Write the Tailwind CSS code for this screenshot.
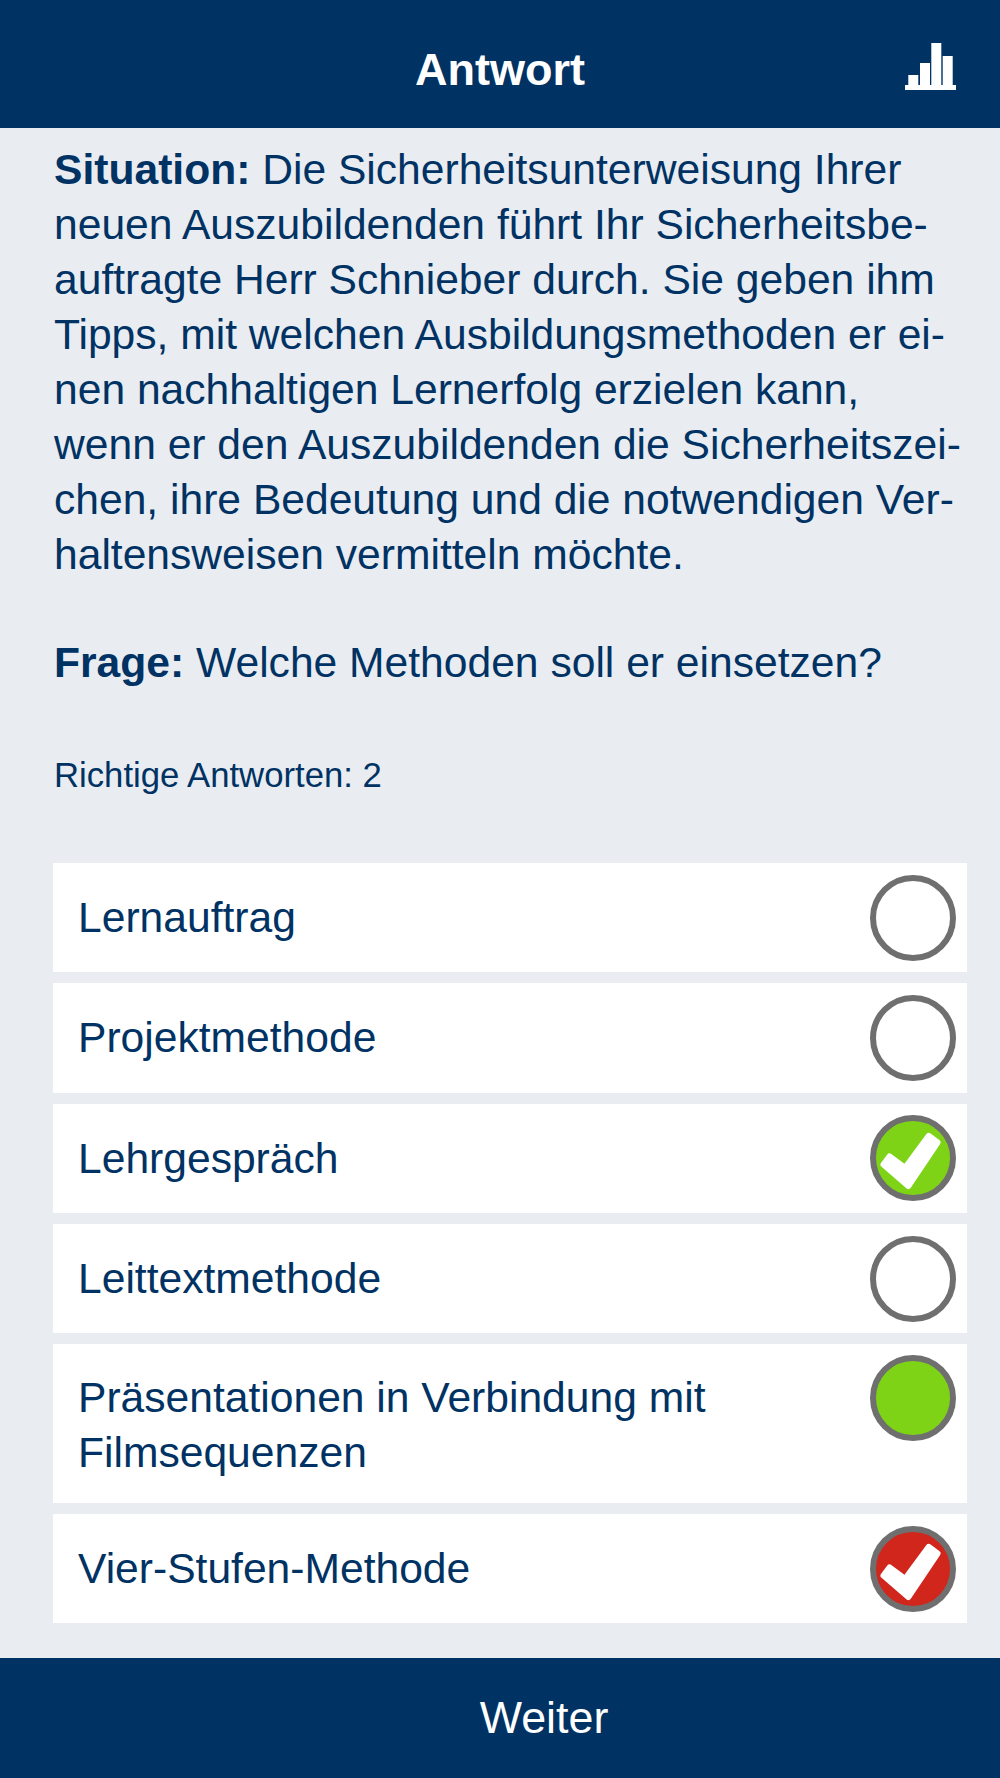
<!DOCTYPE html>
<html lang="de">
<head>
    <meta charset="UTF-8">
    <title>Antwort</title>
    <script src="https://cdn.jsdelivr.net/npm/@tailwindcss/browser@4"></script>
</head>
<body class="bg-[#e9ecf1] font-['Liberation_Sans',Arial,sans-serif] text-[#003263]">
    <div class="h-[1778px] flex flex-col">
        <header class="relative h-[128px] shrink-0 bg-[#003263] flex items-center justify-center">
            <h1 class="text-white text-[45px] font-bold pt-[11px]">Antwort</h1>
            <svg class="absolute left-[905px] top-[42px]" width="52" height="49" viewBox="0 0 52 49" fill="#fff">
                <rect x="3.300" y="33" width="10" height="10"/>
                <rect x="15" y="21" width="10" height="22"/>
                <rect x="26.300" y="1" width="10" height="42"/>
                <rect x="37.700" y="14" width="10" height="29"/>
                <rect x="0" y="43" width="51" height="5"/>
            </svg>
        </header>
        <main class="flex-1 pl-[53px] pr-[33px]">
            <p class="pt-[14px] pl-[1px] text-[42.6px] leading-[55px]">
                <b>Situation:</b> Die Sicherheitsunterweisung Ihrer<br>
                neuen Auszubildenden führt Ihr Sicherheitsbe-<br>
                auftragte Herr Schnieber durch. Sie geben ihm<br>
                Tipps, mit welchen Ausbildungsmethoden er ei-<br>
                nen nachhaltigen Lernerfolg erzielen kann,<br>
                wenn er den Auszubildenden die Sicherheitszei-<br>
                chen, ihre Bedeutung und die notwendigen Ver-<br>
                haltensweisen vermitteln möchte.
            </p>
            <p class="mt-[53px] pl-[1px] text-[42.6px] leading-[55px]"><b>Frage:</b> Welche Methoden soll er einsetzen?</p>
            <p class="mt-[63px] pl-[1px] text-[34.7px] leading-[44px]">Richtige Antworten: 2</p>
            <ul class="mt-[66px] flex flex-col gap-[11px] text-[42.6px] leading-[55px]">
                <li class="bg-white h-[109.300px] pl-[25px] pr-[11px] flex items-center justify-between">
                    <span>Lernauftrag</span>
                    <span class="w-[86px] h-[86px] rounded-full border-[6px] border-[#6f6f6f] bg-white"></span>
                </li>
                <li class="bg-white h-[109.300px] pl-[25px] pr-[11px] flex items-center justify-between">
                    <span>Projektmethode</span>
                    <span class="w-[86px] h-[86px] rounded-full border-[6px] border-[#6f6f6f] bg-white"></span>
                </li>
                <li class="bg-white h-[109.300px] pl-[25px] pr-[11px] flex items-center justify-between">
                    <span>Lehrgespräch</span>
                    <span class="w-[86px] h-[86px] rounded-full border-[6px] border-[#6f6f6f] bg-[#7ed317]">
                        <svg width="74" height="74" viewBox="0 0 74 74"><polygon points="13.500,35.500 29,47 52.800,14.800 61.500,21.500 32.300,65 7.500,43.500" fill="#fff" stroke="#fff" stroke-width="6" stroke-linejoin="round"/></svg>
                    </span>
                </li>
                <li class="bg-white h-[109.300px] pl-[25px] pr-[11px] flex items-center justify-between">
                    <span>Leittextmethode</span>
                    <span class="w-[86px] h-[86px] rounded-full border-[6px] border-[#6f6f6f] bg-white"></span>
                </li>
                <li class="bg-white h-[159px] pl-[25px] pr-[11px] pt-[26px] flex items-start justify-between">
                    <span>Präsentationen in Verbindung mit<br>Filmsequenzen</span>
                    <span class="w-[86px] h-[86px] -mt-[15px] rounded-full border-[6px] border-[#6f6f6f] bg-[#7ed317]"></span>
                </li>
                <li class="bg-white h-[109.300px] pl-[25px] pr-[11px] flex items-center justify-between">
                    <span>Vier-Stufen-Methode</span>
                    <span class="w-[86px] h-[86px] rounded-full border-[6px] border-[#6f6f6f] bg-[#d0261c]">
                        <svg width="74" height="74" viewBox="0 0 74 74"><polygon points="13.500,35.500 29,47 52.800,14.800 61.500,21.500 32.300,65 7.500,43.500" fill="#fff" stroke="#fff" stroke-width="6" stroke-linejoin="round"/></svg>
                    </span>
                </li>
            </ul>
        </main>
        <footer class="h-[120px] shrink-0 bg-[#003263] flex items-center justify-center pl-[88px] text-white text-[44.800px]">Weiter</footer>
    </div>
</body>
</html>
